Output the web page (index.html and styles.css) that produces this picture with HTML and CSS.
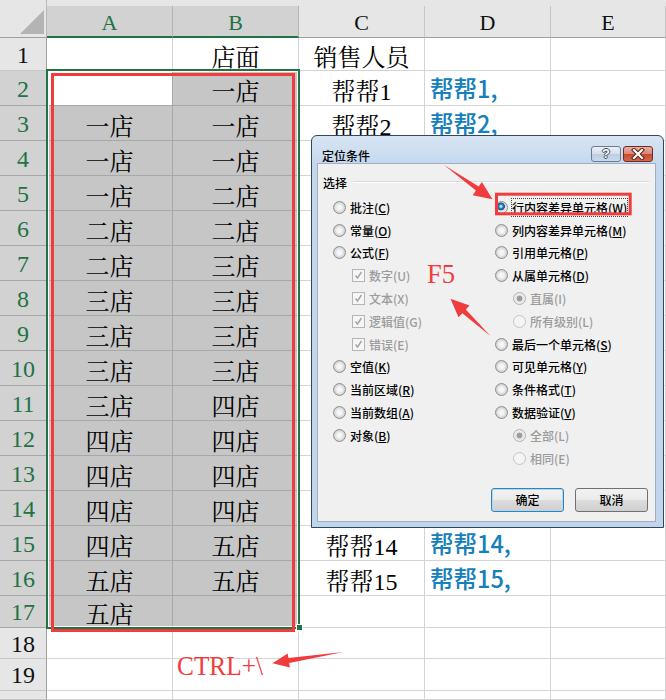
FILE: index.html
```html
<!DOCTYPE html>
<html lang="zh-CN">
<head>
<meta charset="utf-8">
<title>定位条件</title>
<link rel="stylesheet" href="styles.css">
</head>
<body>
<div class="sheet">
  <div class="corner"><span class="tri"></span></div>
  <div class="strip"></div>
  <div class="ch sel">A</div><div class="ch sel">B</div><div class="ch">C</div><div class="ch">D</div><div class="ch">E</div>

  <div class="rh">1</div><div class="c"></div><div class="c">店面</div><div class="c">销售人员</div><div class="c"></div><div class="c"></div>
  <div class="rh sel">2</div><div class="c act"></div><div class="c s">一店</div><div class="c">帮帮1</div><div class="c d">帮帮1,</div><div class="c"></div>
  <div class="rh sel">3</div><div class="c s">一店</div><div class="c s">一店</div><div class="c">帮帮2</div><div class="c d">帮帮2,</div><div class="c"></div>
  <div class="rh sel">4</div><div class="c s">一店</div><div class="c s">一店</div><div class="c"></div><div class="c"></div><div class="c"></div>
  <div class="rh sel">5</div><div class="c s">一店</div><div class="c s">二店</div><div class="c"></div><div class="c"></div><div class="c"></div>
  <div class="rh sel">6</div><div class="c s">二店</div><div class="c s">二店</div><div class="c"></div><div class="c"></div><div class="c"></div>
  <div class="rh sel">7</div><div class="c s">二店</div><div class="c s">三店</div><div class="c"></div><div class="c"></div><div class="c"></div>
  <div class="rh sel">8</div><div class="c s">三店</div><div class="c s">三店</div><div class="c"></div><div class="c"></div><div class="c"></div>
  <div class="rh sel">9</div><div class="c s">三店</div><div class="c s">三店</div><div class="c"></div><div class="c"></div><div class="c"></div>
  <div class="rh sel">10</div><div class="c s">三店</div><div class="c s">三店</div><div class="c"></div><div class="c"></div><div class="c"></div>
  <div class="rh sel">11</div><div class="c s">三店</div><div class="c s">四店</div><div class="c"></div><div class="c"></div><div class="c"></div>
  <div class="rh sel">12</div><div class="c s">四店</div><div class="c s">四店</div><div class="c"></div><div class="c"></div><div class="c"></div>
  <div class="rh sel">13</div><div class="c s">四店</div><div class="c s">四店</div><div class="c"></div><div class="c"></div><div class="c"></div>
  <div class="rh sel">14</div><div class="c s">四店</div><div class="c s">四店</div><div class="c"></div><div class="c"></div><div class="c"></div>
  <div class="rh sel">15</div><div class="c s">四店</div><div class="c s">五店</div><div class="c">帮帮14</div><div class="c d">帮帮14,</div><div class="c"></div>
  <div class="rh sel">16</div><div class="c s">五店</div><div class="c s">五店</div><div class="c">帮帮15</div><div class="c d">帮帮15,</div><div class="c"></div>
  <div class="rh sel">17</div><div class="c s">五店</div><div class="c s"></div><div class="c"></div><div class="c"></div><div class="c"></div>
  <div class="rh">18</div><div class="c"></div><div class="c"></div><div class="c"></div><div class="c"></div><div class="c"></div>
  <div class="rh">19</div><div class="c"></div><div class="c"></div><div class="c"></div><div class="c"></div><div class="c"></div>
  <div class="rh"></div><div class="c"></div><div class="c"></div><div class="c"></div><div class="c"></div><div class="c"></div>
</div>

<div class="selbox"></div>
<div class="handle"></div>
<div class="redbox"></div>

<div class="dialog">
  <div class="titlebar">
    <span class="title">定位条件</span>
    <div class="tbtns">
      <span class="tb help">?</span>
      <span class="tb close"><svg width="16" height="12" viewBox="0 0 16 12"><path d="M4 2 L12 10 M12 2 L4 10" stroke="#5a2219" stroke-width="4.2" stroke-linecap="square"/><path d="M4 2 L12 10 M12 2 L4 10" stroke="#fff" stroke-width="2.2" stroke-linecap="square"/></svg></span>
    </div>
  </div>
  <div class="content">
    <div class="group"><span class="glabel">选择</span><span class="gline"></span></div>
    <div class="cols">
      <div class="col left">
        <div class="opt"><span class="radio"></span><span>批注(<u>C</u>)</span></div>
        <div class="opt"><span class="radio"></span><span>常量(<u>O</u>)</span></div>
        <div class="opt"><span class="radio"></span><span>公式(<u>F</u>)</span></div>
        <div class="opt cbi dis"><span class="cb"><svg width="11" height="11" viewBox="0 0 11 11"><path d="M2.5 5.5 L4.5 8 L8.5 2" fill="none" stroke="#a3a3a3" stroke-width="1.4"/></svg></span><span>数字(U)</span></div>
        <div class="opt cbi dis"><span class="cb"><svg width="11" height="11" viewBox="0 0 11 11"><path d="M2.5 5.5 L4.5 8 L8.5 2" fill="none" stroke="#a3a3a3" stroke-width="1.4"/></svg></span><span>文本(X)</span></div>
        <div class="opt cbi dis"><span class="cb"><svg width="11" height="11" viewBox="0 0 11 11"><path d="M2.5 5.5 L4.5 8 L8.5 2" fill="none" stroke="#a3a3a3" stroke-width="1.4"/></svg></span><span>逻辑值(G)</span></div>
        <div class="opt cbi dis"><span class="cb"><svg width="11" height="11" viewBox="0 0 11 11"><path d="M2.5 5.5 L4.5 8 L8.5 2" fill="none" stroke="#a3a3a3" stroke-width="1.4"/></svg></span><span>错误(E)</span></div>
        <div class="opt"><span class="radio"></span><span>空值(<u>K</u>)</span></div>
        <div class="opt"><span class="radio"></span><span>当前区域(<u>R</u>)</span></div>
        <div class="opt"><span class="radio"></span><span>当前数组(<u>A</u>)</span></div>
        <div class="opt"><span class="radio"></span><span>对象(<u>B</u>)</span></div>
      </div>
      <div class="col right">
        <div class="opt"><span class="radio on"></span><span class="focus">行内容差异单元格(<u>W</u>)</span></div>
        <div class="opt"><span class="radio"></span><span>列内容差异单元格(<u>M</u>)</span></div>
        <div class="opt"><span class="radio"></span><span>引用单元格(<u>P</u>)</span></div>
        <div class="opt"><span class="radio"></span><span>从属单元格(<u>D</u>)</span></div>
        <div class="opt ind dis"><span class="radio don"></span><span>直属(I)</span></div>
        <div class="opt ind dis"><span class="radio doff"></span><span>所有级别(L)</span></div>
        <div class="opt"><span class="radio"></span><span>最后一个单元格(<u>S</u>)</span></div>
        <div class="opt"><span class="radio"></span><span>可见单元格(<u>Y</u>)</span></div>
        <div class="opt"><span class="radio"></span><span>条件格式(<u>T</u>)</span></div>
        <div class="opt"><span class="radio"></span><span>数据验证(<u>V</u>)</span></div>
        <div class="opt ind dis"><span class="radio don"></span><span>全部(L)</span></div>
        <div class="opt ind dis"><span class="radio doff"></span><span>相同(E)</span></div>
      </div>
    </div>
    <div class="btns"><button class="btn ok">确定</button><button class="btn">取消</button></div>
  </div>
</div>

<svg class="overlay" width="666" height="700" viewBox="0 0 666 700">
  <rect x="496.5" y="194.2" width="133.7" height="19.6" fill="none" stroke="#f03c3c" stroke-width="3"/>
  <polygon points="444,165 478.7,186.6 481.9,182 492.5,199.3 472.7,195.2 475.9,190.6" fill="#f03c3c"/>
  <polygon points="490.5,336 465.8,309.6 469.5,305.6 450.5,298.8 458.5,317.2 462.3,313.2" fill="#f03c3c"/>
  <polygon points="343.5,652 288.4,658 287.7,653.6 272.5,663.3 289.9,667.4 289.2,663" fill="#f03c3c"/>
  <text class="ann" x="427" y="283" font-size="27" textLength="28" lengthAdjust="spacingAndGlyphs">F5</text>
  <text class="ann" x="177" y="675" font-size="28" textLength="86" lengthAdjust="spacingAndGlyphs">CTRL+\</text>
</svg>
</body>
</html>
```

FILE: styles.css
```css
* { box-sizing: border-box; margin: 0; padding: 0; }
html, body { width: 666px; height: 700px; overflow: hidden; background: #fff; }
body {
  position: relative;
  font-family: "Liberation Serif", "Noto Serif CJK SC", "Noto Sans CJK SC", serif;
  color: #000;
}

.sheet {
  display: grid;
  grid-template-columns: 47px 126px 126px 126px 126px 1fr;
  grid-template-rows: 6px 32px 33px repeat(15, 35px) 32px 31px 32px 9px;
  width: 666px;
}

.corner {
  grid-row: 1 / 3;
  grid-column: 1;
  background: #e6e6e6;
  border-right: 1px solid #b8b8b8;
  border-bottom: 1px solid #9f9f9f;
  display: flex;
  justify-content: flex-end;
  align-items: flex-end;
  padding: 0 2px 3px 0;
}
.tri {
  width: 24px;
  height: 24px;
  background: #b4b4b4;
  clip-path: polygon(100% 0, 100% 100%, 0 100%);
}
.strip {
  grid-row: 1;
  grid-column: 2 / -1;
  background: #e6e6e6;
}

.ch {
  background: #e6e6e6;
  border-right: 1px solid #c6c6c6;
  border-bottom: 1px solid #9f9f9f;
  display: flex;
  align-items: center;
  justify-content: center;
  font-size: 22px;
  padding-top: 3px;
  color: #111;
}
.ch.sel {
  background: #d2d2d2;
  color: #217346;
  border-right-color: #b4b4b4;
  border-bottom: 2px solid #217346;
}

.rh {
  background: #e6e6e6;
  border-right: 1px solid #9f9f9f;
  border-bottom: 1px solid #c6c6c6;
  display: flex;
  align-items: center;
  justify-content: center;
  font-size: 24px;
  padding-top: 2px;
  color: #111;
}
.rh.sel {
  background: #d2d2d2;
  color: #217346;
  border-bottom-color: #a6a6a6;
}

.c {
  border-right: 1px solid #d4d4d4;
  border-bottom: 1px solid #d4d4d4;
  display: flex;
  align-items: center;
  justify-content: center;
  font-size: 24px;
  white-space: nowrap;
  overflow: hidden;
  padding-top: 2px;
}
.c.s {
  background: #c6c6c6;
  border-color: #a8a8a8;
}
.c.act {
  border-color: #a8a8a8;
}
.c.d {
  justify-content: flex-start;
  padding-left: 5px;
  font-family: "Noto Sans CJK SC", "Noto Sans", sans-serif;
  font-weight: 500;
  color: #1580bb;
  font-size: 23.5px;
  padding-top: 0;
}

.selbox {
  position: absolute;
  left: 46px;
  top: 69px;
  width: 254px;
  height: 560px;
  border: 2px solid #217346;
  box-shadow: inset 0 0 0 1px #fff;
}
.handle {
  position: absolute;
  left: 296px;
  top: 624px;
  width: 7px;
  height: 7px;
  background: #217346;
  border: 1px solid #fff;
}
.redbox {
  position: absolute;
  left: 51px;
  top: 73px;
  width: 244px;
  height: 559px;
  border: 3px solid #f03c3c;
}

/* dialog */
.dialog {
  position: absolute;
  left: 311px;
  top: 135px;
  width: 353px;
  height: 393px;
  border: 1px solid #34465c;
  border-radius: 6px 6px 0 0;
  background: linear-gradient(#d7e5f4, #c3d7ed 30px, #c1d5ec);
  padding: 0 7px 5px 5px;
  display: flex;
  flex-direction: column;
  font-family: "Noto Sans CJK SC", "Noto Sans", sans-serif;
  font-size: 12px;
  font-weight: 500;
  color: #000;
}
.titlebar {
  height: 27px;
  display: flex;
  justify-content: space-between;
  align-items: flex-start;
  flex: none;
}
.title {
  margin: 13px 0 0 5px;
  line-height: 14px;
}
.tbtns {
  display: flex;
  gap: 2px;
  margin: 10px 3px 0 0;
}
.tb {
  width: 30px;
  height: 16px;
  border: 1px solid #6b7c92;
  border-radius: 3px;
  display: flex;
  align-items: center;
  justify-content: center;
}
.help {
  background: linear-gradient(#eaf0f8, #d3dfed 50%, #bccde2 51%, #cbdaeb);
  color: #fff;
  font-family: "Liberation Sans", sans-serif;
  font-weight: 700;
  font-size: 13px;
  line-height: 14px;
  text-shadow: 1px 0 #3d4b5d, -1px 0 #3d4b5d, 0 1px #3d4b5d, 0 -1px #3d4b5d;
}
.close {
  background: linear-gradient(#eab0a2, #dc8571 50%, #c7492f 51%, #d26a52);
  border-color: #6d2a20;
}

.content {
  flex: 1;
  background: #f0f0f0;
  border: 1px solid #9fb0c4;
  display: flex;
  flex-direction: column;
}
.group {
  display: flex;
  align-items: center;
  height: 16px;
  margin: 10px 6px 0 5px;
}
.gline {
  flex: 1;
  height: 2px;
  border-top: 1px solid #d5dadf;
  border-bottom: 1px solid #fff;
  margin-left: 6px;
}
.cols {
  display: flex;
  margin-top: 6px;
  padding-left: 15px;
}
.col.left { width: 162px; flex: none; }
.col.right { flex: 1; }
.opt {
  height: 22.8px;
  display: flex;
  align-items: center;
  gap: 4px;
  white-space: nowrap;
}
.opt.cbi { padding-left: 19px; }
.opt.ind { padding-left: 18px; }
.opt.dis { color: #9b9b9b; }
.focus { outline: 1px dotted #444; }

.radio {
  flex: none;
  width: 13px;
  height: 13px;
  border-radius: 50%;
  border: 1px solid #8e8f8f;
  background: radial-gradient(circle at 50% 50%, #f6f6f6 0 2px, #e2e2e2 4px, #cfcfcf 5.5px);
}
.radio.on {
  background: radial-gradient(circle at 45% 40%, #a8dcff 0 1px, #2c83cf 2px, #184f8a 3.6px, #d8d8d8 4.2px, #eeeeee 6px);
}
.radio.doff {
  border-color: #c4c4c4;
  background: #f4f4f4;
}
.radio.don {
  border-color: #b0b0b0;
  background: radial-gradient(circle, #9c9c9c 0 2.6px, #e4e4e4 3.2px, #f2f2f2 6px);
}
.cb {
  flex: none;
  width: 13px;
  height: 13px;
  border: 1px solid #b5b5b5;
  background: #f6f6f6;
  display: flex;
  align-items: center;
  justify-content: center;
}

.btns {
  display: flex;
  justify-content: flex-end;
  gap: 11px;
  margin-top: 18px;
  padding-right: 7px;
}
.btn {
  width: 73px;
  height: 24px;
  border: 1px solid #707070;
  border-radius: 3px;
  background: linear-gradient(#f2f2f2, #ebebeb 50%, #dddddd 51%, #cfcfcf);
  font: 500 12px "Noto Sans CJK SC", "Noto Sans", sans-serif;
  color: #000;
}
.btn.ok {
  border-color: #3c7fb1;
  box-shadow: inset 0 0 0 1px #a6dcf7;
}

.overlay {
  position: absolute;
  left: 0;
  top: 0;
  pointer-events: none;
}
.ann {
  fill: #f03c3c;
  font-family: "Liberation Serif", serif;
}
```
